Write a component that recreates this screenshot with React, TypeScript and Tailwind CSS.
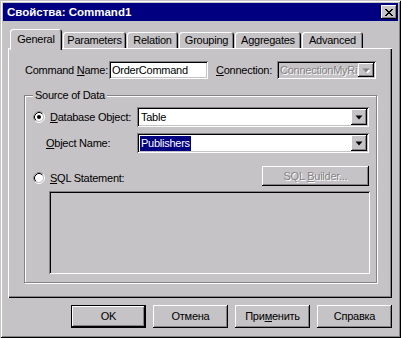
import React from "react";

const raised =
  "shadow-[inset_-1px_-1px_#000,inset_1px_1px_#fff,inset_-2px_-2px_#848284,inset_2px_2px_#c6c3c6]";
const sunken =
  "shadow-[inset_1px_1px_#848284,inset_-1px_-1px_#fff,inset_2px_2px_#000,inset_-2px_-2px_#c6c3c6]";

function Arrow({ disabled }: { disabled?: boolean }) {
  return (
    <svg width="8" height="5" viewBox="0 0 8 5">
      {disabled && <polygon points="2,2 9,2 5.5,5.5" fill="#fff" />}
      <polygon points="0.5,0.5 7.5,0.5 4,4.5" fill={disabled ? "#848284" : "#000"} />
    </svg>
  );
}

function Combo({ value, width, height, disabled, selected }: { value: string; width: string; height: string; disabled?: boolean; selected?: boolean }) {
  return (
    <div className={`${width} ${height} ${sunken} ${disabled ? "bg-[#c6c3c6]" : "bg-white"} flex p-[2px]`}>
      <div className="flex-1 min-w-0 flex items-center pl-[1px] overflow-hidden whitespace-nowrap">
        {selected ? (
          <span className="bg-[#000080] text-white px-[1px] py-[1px]">{value}</span>
        ) : (
          <span className={disabled ? "text-[#848284] [text-shadow:1px_1px_#fff]" : "pl-[1px]"}>{value}</span>
        )}
      </div>
      <div className={`w-[16px] h-full bg-[#c6c3c6] ${raised} flex items-center justify-center`}>
        <Arrow disabled={disabled} />
      </div>
    </div>
  );
}

function Radio({ checked }: { checked?: boolean }) {
  return (
    <svg width="12" height="12" viewBox="0 0 12 12" className="shrink-0">
      <circle cx="6" cy="6" r="4.2" fill="#fff" />
      <circle cx="6" cy="6" r="5.5" fill="none" stroke="#fff" />
      <path d="M2.11 9.89 A5.5 5.5 0 0 1 9.89 2.11" fill="none" stroke="#848284" />
      <circle cx="6" cy="6" r="4.5" fill="none" stroke="#c6c3c6" />
      <path d="M2.82 9.18 A4.5 4.5 0 0 1 9.18 2.82" fill="none" stroke="#000" />
      {checked && <circle cx="6" cy="6" r="2" fill="#000" />}
    </svg>
  );
}

const tabs = [
  { label: "Parameters", w: "w-[63px]" },
  { label: "Relation", w: "w-[51px]" },
  { label: "Grouping", w: "w-[55px]" },
  { label: "Aggregates", w: "w-[66px]" },
  { label: "Advanced", w: "w-[61px]" },
];

function Button({ children, isDefault }: { children: React.ReactNode; isDefault?: boolean }) {
  return (
    <div
      className={`w-[75px] h-[23px] bg-[#c6c3c6] flex items-center justify-center ${
        isDefault
          ? "shadow-[inset_0_0_0_1px_#000,inset_-2px_-2px_#000,inset_2px_2px_#fff,inset_-3px_-3px_#848284]"
          : raised
      }`}
    >
      {children}
    </div>
  );
}

export default function App() {
  return (
    <div className="w-[401px] h-[338px] bg-[#c6c3c6] p-[3px] shadow-[inset_1px_1px_#c6c3c6,inset_-1px_-1px_#000,inset_2px_2px_#fff,inset_-2px_-2px_#848284] flex flex-col font-['Liberation_Sans',Arial,sans-serif] text-[11px] leading-[13px] tracking-[-0.25px] text-black whitespace-nowrap">
      {/* Title bar */}
      <div className="h-[18px] bg-[#000080] flex items-center justify-between pl-[4px] pr-[1px]">
        <span className="text-white font-bold text-[11.5px] tracking-normal">Свойства: Command1</span>
        <div className={`w-[16px] h-[14px] bg-[#c6c3c6] ${raised} flex items-center justify-center`}>
          <svg width="8" height="7" viewBox="0 0 8 7">
            <path d="M0 0 L7 7 M1 0 L8 7 M7 0 L0 7 M8 0 L1 7" stroke="#000" strokeWidth="1" />
          </svg>
        </div>
      </div>

      <div className="pl-[5px] pt-[8px] flex flex-col">
        {/* Tabs */}
        <div className="flex items-end h-[19px] pl-[2px]">
          <div className="w-[52px] h-[21px] -mb-[2px] relative z-10 bg-[#c6c3c6] rounded-t-[3px] shadow-[inset_1px_1px_#fff,inset_-1px_0_#000,inset_-2px_0_#848284] flex items-start justify-center pt-[4px]">
            General
          </div>
          {tabs.map((t) => (
            <div
              key={t.label}
              className={`${t.w} h-[16px] ml-[1px] bg-[#c6c3c6] rounded-t-[3px] shadow-[inset_1px_1px_#fff,inset_-1px_0_#000,inset_-2px_0_#848284] flex items-center justify-center`}
            >
              {t.label}
            </div>
          ))}
        </div>

        {/* Panel */}
        <div className="w-[384px] h-[250px] bg-[#c6c3c6] shadow-[inset_1px_1px_#fff,inset_-1px_-1px_#000,inset_-2px_-2px_#848284] pl-[16px] pt-[13px] flex flex-col">
          <div className="flex items-center h-[18px]">
            <span className="w-[85px] pl-[1px]">
              Command <u>N</u>ame:
            </span>
            <div className={`w-[99px] h-[18px] bg-white ${sunken} flex items-center pl-[3px]`}>OrderCommand</div>
            <span className="w-[61px] ml-[8px]">
              <u>C</u>onnection:
            </span>
            <Combo value="ConnectionMyRi" width="w-[99px]" height="h-[18px]" disabled />
          </div>

          {/* Source of Data */}
          <div className="relative mt-[16px] w-[353px] h-[188px] border border-[#848284] shadow-[inset_1px_1px_#fff,1px_1px_#fff] pl-[8px] pt-[11px] flex flex-col">
            <span className="absolute -top-[7px] left-[8px] px-[2px] bg-[#c6c3c6]">Source of Data</span>

            <div className="flex items-center h-[20px]">
              <div className="w-[104px] flex items-center gap-[5px]">
                <Radio checked />
                <span>
                  <u>D</u>atabase Object:
                </span>
              </div>
              <Combo value="Table" width="w-[232px]" height="h-[20px]" />
            </div>

            <div className="flex items-center h-[20px] mt-[6px]">
              <div className="w-[104px] pl-[13px]">
                <u>O</u>bject Name:
              </div>
              <Combo value="Publishers" width="w-[232px]" height="h-[20px]" selected />
            </div>

            <div className="flex items-center justify-between w-[336px] h-[20px] mt-[13px]">
              <div className="flex items-center gap-[5px] mt-[4px]">
                <Radio />
                <span>
                  <u>S</u>QL Statement:
                </span>
              </div>
              <div className={`w-[107px] h-[20px] ${raised} flex items-center justify-center text-[#848284] [text-shadow:1px_1px_#fff]`}>
                <span>
                  SQL <u>B</u>uilder...
                </span>
              </div>
            </div>

            <div className={`mt-[5px] ml-[16px] w-[321px] h-[83px] ${sunken}`} />
          </div>
        </div>

        {/* Buttons */}
        <div className="w-[384px] flex justify-end gap-[7px] mt-[7px]">
          <Button isDefault>OK</Button>
          <Button>Отмена</Button>
          <Button>
            <span>
              При<u>м</u>енить
            </span>
          </Button>
          <Button>Справка</Button>
        </div>
      </div>
    </div>
  );
}
